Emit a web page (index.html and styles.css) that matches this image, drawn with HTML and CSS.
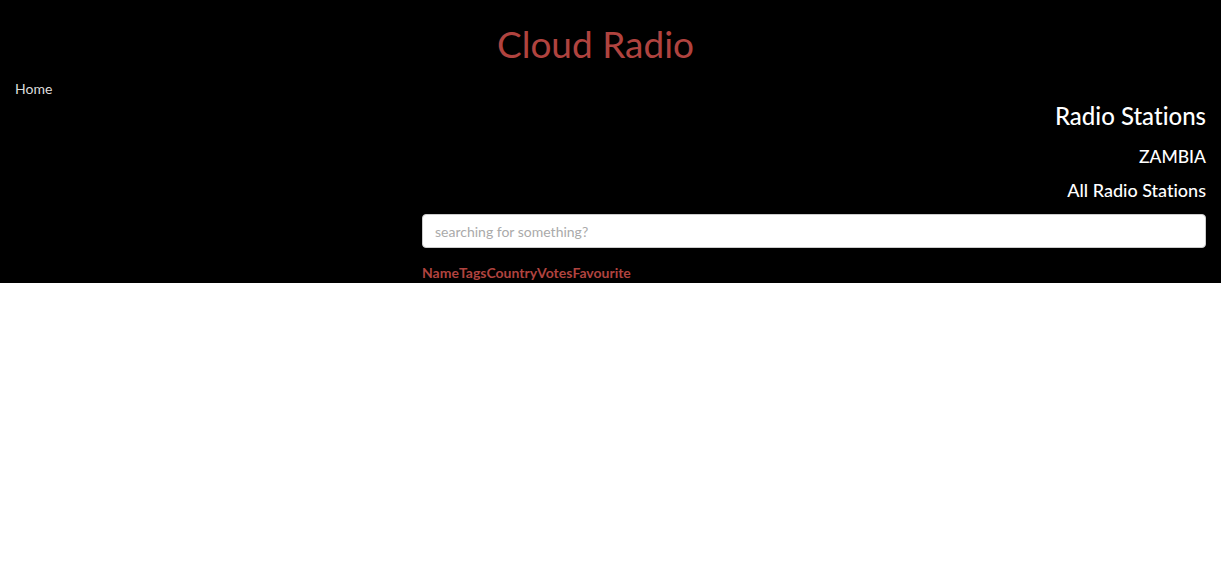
FILE: index.html
```html
<!DOCTYPE html>
<html>
<head>
<meta charset="utf-8">
<link rel="stylesheet" href="styles.css">
</head>
<body>
<div class="app">
  <header class="header">
    <h1 class="title">Cloud Radio</h1>
  </header>
  <div class="main">
    <nav class="side">
      <a class="nav-link" href="#">Home</a>
    </nav>
    <section class="content">
      <h2 class="h-stations">Radio Stations</h2>
      <h3 class="h-country">ZAMBIA</h3>
      <h3 class="h-all">All Radio Stations</h3>
      <input class="search" type="text" placeholder="searching for something?">
      <div class="tabs">
        <span class="tab">Name</span><span class="tab">Tags</span><span class="tab">Country</span><span class="tab">Votes</span><span class="tab">Favourite</span>
      </div>
    </section>
  </div>
</div>
</body>
</html>
```
FILE: styles.css
```css
* { box-sizing: border-box; }
html, body { margin: 0; padding: 0; background: #fff; }
body { font-family: "Lato", "Open Sans", sans-serif; font-variant-ligatures: none; }
.app { background: #000; color: #fff; height: 283px; }
.header { padding: 19px 30px 0 0; text-align: center; }
.title { margin: 0; font-size: 37px; font-weight: 400; color: #b0433f; line-height: 50px; }
.main { display: flex; }
.side { width: 407px; padding: 8px 15px 0; }
.nav-link { color: #ddd; text-decoration: none; font-size: 14px; line-height: 24px; }
.content { flex: 1; padding: 30px 15px 0 15px; display: flex; flex-direction: column; align-items: stretch; }
.h-stations { margin: 0; text-align: right; font-size: 24px; font-weight: 500; line-height: 34px; }
.h-country { margin: 10px 0 0; text-align: right; font-size: 17.5px; font-weight: 500; line-height: 28px; }
.h-all { margin: 5px 0 0; text-align: right; font-size: 18px; font-weight: 500; line-height: 28px; }
.search { margin-top: 10px; height: 34px; border: 1px solid #ccc; border-radius: 4px; padding: 0 12px; font-family: inherit; font-size: 14px; color: #333; outline: none; }
.search::placeholder { color: #aaa; }
.tabs { margin-top: 15px; display: flex; font-size: 14px; font-weight: 700; color: #b0433f; line-height: 20px; }
```
